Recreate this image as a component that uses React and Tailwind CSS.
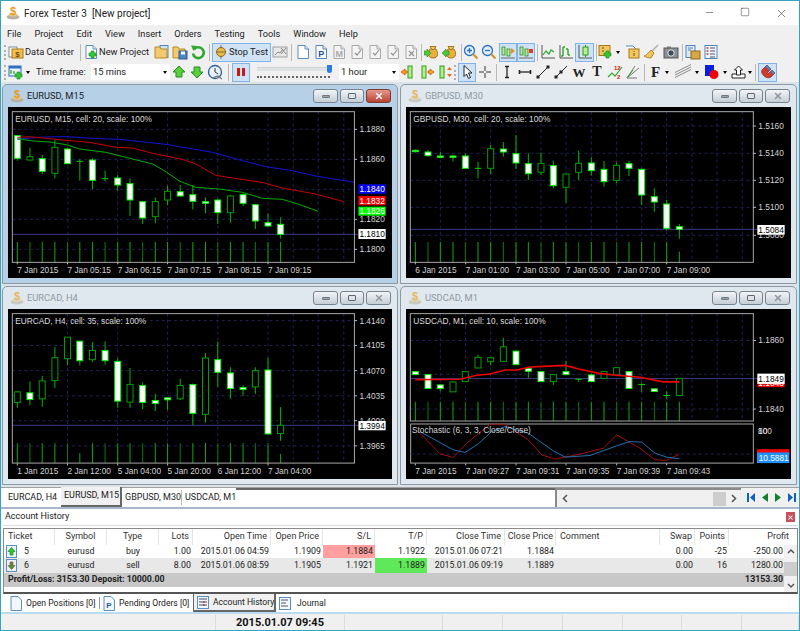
import { Minus, Square, X } from 'lucide-react'

const Svg = ({ w = 16, h = 16, children }) => (
  <svg width={w} height={h} viewBox={`0 0 ${w} ${h}`} className="shrink-0">{children}</svg>
)

const Grip = () => <div className="w-[2px] h-[15px] shrink-0 border-l-2 border-dotted border-[#b0b0b0]" />
const Sep = ({ className = '' }) => <div className={`w-px h-[17px] bg-[#b8b8b8] shrink-0 ${className}`} />
const Tb = ({ children }) => <div className="w-[18px] h-[19px] flex items-center justify-center shrink-0">{children}</div>
const Hl = ({ children, className = 'w-[18px]' }) => (
  <div className={`h-[19px] flex items-center justify-center shrink-0 bg-[#cfe3f5] border border-[#7eb4ea] ${className}`}>{children}</div>
)
const Caret = () => <div className="w-0 h-0 ml-[2px] border-x-[2.5px] border-x-transparent border-t-[3px] border-t-black shrink-0" />

const Logo = ({ dim }) => (
  <Svg w={14} h={14}>
    <ellipse cx="7" cy="11" rx="6.5" ry="2.6" fill={dim ? '#c9c9c0' : '#b8b0a0'} />
    <ellipse cx="7" cy="8.8" rx="4.5" ry="1.8" fill={dim ? '#e0d8c0' : '#e0c890'} />
    <text x="7" y="9" fontSize="11" fontWeight="700" textAnchor="middle" fill={dim ? '#e8b860' : '#e89a20'} fontFamily="Liberation Sans">$</text>
  </Svg>
)

const Doc = ({ children, stroke = '#5b8fc0', fill = '#fff' }) => (
  <Svg>
    <path d="M3 1.5h7l3.5 3.5v9.5H3z" fill={fill} stroke={stroke} />
    <path d="M10 1.5V5h3.5" fill="#dce8f4" stroke={stroke} />
    {children}
  </Svg>
)
const GreyDoc = ({ children }) => <Doc stroke="#a8a8a8" fill="#f4f4f4">{children}</Doc>
const Check = () => <path d="M6 9l2 2 4-5" fill="none" stroke="#909090" strokeWidth="1.2" />

const Plus = ({ x = 9, y = 9 }) => (
  <path d={`M${x + 2} ${y}h3v2h2v3h-2v2h-3v-2h-2v-3h2z`} fill="#35c435" stroke="#1c8a1c" strokeWidth=".6" />
)
const Folder = () => <path d="M1 3h5l1 2h6v9H1z" fill="#f2c870" stroke="#b98a1e" />
const Money = ({ arrow }) => (
  <Svg>
    <path d="M6 5c-2 3-3 9 3 9s5-6 3-9z" fill="#e9b040" stroke="#a87618" />
    <path d="M6 2.5h6l-2 3H8z" fill="#f0c860" stroke="#a87618" />
    <path d={arrow === 'l' ? 'M0 9l4-4v2h3v4H4v2z' : 'M7 9L3 5v2H0v4h3v2z'} fill="#4cc83a" stroke="#2b8a20" strokeWidth=".6" />
  </Svg>
)
const Lens = ({ plus }) => (
  <Svg>
    <circle cx="6.5" cy="6.5" r="5" fill="#dff0fb" stroke="#2f6fc0" strokeWidth="1.3" />
    <path d="M10 10l4.5 4.5" stroke="#c99a30" strokeWidth="2.2" />
    <path d={plus ? 'M4 6.5h5M6.5 4v5' : 'M4 6.5h5'} stroke="#2f6fc0" strokeWidth="1.3" />
  </Svg>
)
const CandleMini = ({ x, y, h, fill = '#b6f08a' }) => (
  <rect x={x} y={y} width="3" height={h} fill={fill} stroke="#1f7a1f" strokeWidth=".7" />
)
const ChartShift = ({ right }) => (
  <Svg>
    <path d="M1 14h14" stroke="#666" />
    <CandleMini x={2} y={3} h={8} />
    <CandleMini x={7} y={5} h={7} />
    <path d={right ? 'M11 4l4 3-4 3z' : 'M11 5h4v4h-4z'} fill={right ? '#ef8c1c' : '#e03c20'} />
  </Svg>
)
const Axis = ({ children }) => (
  <Svg>
    <path d="M2 1v13h13" fill="none" stroke="#555" />
    {children}
  </Svg>
)
const ArrowCandle = ({ kind }) => (
  <Svg>
    <rect x={kind === 'l' ? 7 : 3} y="2" width="4" height="12" fill="#b6f08a" stroke="#2f9a20" />
    {kind === 'l' && <path d="M0 8l4-3v2h2v2H4v2z" fill="#f2b400" stroke="#d02010" strokeWidth=".6" />}
    {kind === 'r' && <path d="M15 8l-4-3v2H9v2h2v2z" fill="#f2b400" stroke="#d02010" strokeWidth=".6" />}
    {kind === 'v' && <path d="M10 6l2.5-3L15 6zM10 10l2.5 3L15 10z" fill="#e86a1c" />}
  </Svg>
)

const Toolbar1 = () => (
  <div className="h-[20px] flex items-center pl-[3px] shrink-0 bg-[#f0f0f0] text-[9.3px] text-[#222]">
    <Grip />
    <div className="w-[70px] ml-[2px] flex items-center gap-[1px] shrink-0">
      <Svg>
        <rect x="1" y="3" width="8" height="10" fill="#fff" stroke="#7a8a99" />
        <rect x="4" y="5" width="11" height="9" fill="#f0c050" stroke="#a87618" />
        <text x="9.5" y="12.5" fontSize="8" fontWeight="700" textAnchor="middle" fill="#7a4a10" fontFamily="Liberation Sans">$</text>
      </Svg>
      <span className="whitespace-nowrap">Data Center</span>
    </div>
    <Sep className="ml-[2px]" />
    <div className="w-[70px] ml-[2px] flex items-center shrink-0">
      <Doc><Plus x={6} y={7} /></Doc>
      <span className="whitespace-nowrap">New Project</span>
    </div>
    <Tb><Svg><rect x="6" y="1.5" width="8" height="12" fill="#cfe3f5" stroke="#4c86c0" /><Folder /></Svg></Tb>
    <Tb><Svg><Folder /><rect x="7" y="7" width="8" height="8" fill="#4c86c0" stroke="#2c5a90" /><rect x="9" y="7.5" width="4" height="3" fill="#fff" /></Svg></Tb>
    <Tb>
      <Svg>
        <path d="M4.2 5.2A5.4 5.4 0 1 1 3 9.5" fill="none" stroke="#2ea82e" strokeWidth="2.6" />
        <path d="M1 1.5l6.5.5-4 5z" fill="#2ea82e" />
      </Svg>
    </Tb>
    <Sep className="ml-[2px]" />
    <Hl className="w-[59px] ml-[2px] gap-[2px] justify-start pl-[2px]">
      <Svg w={12} h={16}>
        <path d="M6 1v14" stroke="#777" />
        <ellipse cx="6" cy="8" rx="4.5" ry="4.5" fill="#e9b94a" stroke="#8a6a20" />
        <path d="M2 8h8" stroke="#8a6a20" />
      </Svg>
      <span className="whitespace-nowrap">Stop Test</span>
    </Hl>
    <Tb><Svg><rect x="1" y="3" width="14" height="10" fill="#e8e8e8" stroke="#a0a0a0" /><path d="M3 11l3-3 2 1 3-4M9 10l5-6M9 4l5 6" fill="none" stroke="#8a8a8a" /></Svg></Tb>
    <Sep className="ml-[2px]" />
    <div className="w-[2px]" />
    <Tb><Doc /></Tb>
    <Tb><Doc fill="#fff" stroke="#4c86c0"><text x="8.2" y="13" fontSize="9" fontWeight="700" textAnchor="middle" fill="#1c4f90" fontFamily="Liberation Sans">P</text></Doc></Tb>
    <Tb><GreyDoc><text x="8.2" y="13" fontSize="9" fontWeight="700" textAnchor="middle" fill="#a8a8a8" fontFamily="Liberation Sans">M</text></GreyDoc></Tb>
    <Tb><GreyDoc><Check /></GreyDoc></Tb>
    <Tb><GreyDoc><Check /></GreyDoc></Tb>
    <Tb><GreyDoc><Check /></GreyDoc></Tb>
    <Tb><GreyDoc><path d="M6 7l5 5M11 7l-5 5" stroke="#909090" strokeWidth="1.2" /></GreyDoc></Tb>
    <Sep className="ml-px" />
    <div className="w-px" />
    <Tb><Money /></Tb>
    <Tb><Money arrow="l" /></Tb>
    <Sep className="ml-[2px]" />
    <Tb><Lens plus /></Tb>
    <Tb><Lens /></Tb>
    <Hl className="w-[18px] ml-px"><ChartShift right /></Hl>
    <Hl className="w-[18px]"><ChartShift /></Hl>
    <Sep className="ml-[2px]" />
    <div className="w-px" />
    <Tb><Axis><path d="M3 11l3-4 3 3 2-4 3 2" fill="none" stroke="#2ea82e" strokeWidth="1.2" /></Axis></Tb>
    <Tb><Axis><path d="M5 3v9M5 3h2M5 12H3M10 5v6M10 11h2M10 5H8" fill="none" stroke="#2ea82e" strokeWidth="1.4" /></Axis></Tb>
    <Hl className="w-[19px]"><Axis><rect x="6" y="3" width="5" height="8" fill="#b6f08a" stroke="#2f9a20" /><path d="M8.5 1v2M8.5 11v2" stroke="#2f9a20" /></Axis></Hl>
    <Sep className="ml-[2px]" />
    <div className="w-px flex-none" />
    <div className="w-[22px] flex items-center shrink-0">
      <Svg><rect x="1" y="1.5" width="11" height="10" fill="#f0c860" stroke="#a87618" /><path d="M4 4h2M4 7h2" stroke="#7a4a10" /><Plus x={6} y={7} /></Svg>
      <Caret />
    </div>
    <div className="w-[4px]" />
    <Tb><Svg><path d="M1 2h7l3 3v3" fill="#fff" stroke="#4c86c0" /><rect x="4" y="5" width="10" height="9" fill="#f0c860" stroke="#a87618" /><path d="M9 7v1M9 9v3" stroke="#7a4a10" /></Svg></Tb>
    <Tb>
      <Svg>
        <path d="M15 1L8 8" stroke="#b0b0b0" strokeWidth="1.6" />
        <path d="M8 6l3 3-3 5c-2 0-6-1-7-2 2 0 4-3 7-6z" fill="#f0c860" stroke="#b08a30" />
      </Svg>
    </Tb>
    <div className="w-[2px]" />
    <Tb><Svg><rect x="1" y="4" width="14" height="10" fill="#8a8f96" stroke="#555" /><circle cx="8" cy="9" r="3.2" fill="#3a4a5a" stroke="#dfe6ec" /><rect x="4" y="2.5" width="4" height="2" fill="#777" /></Svg></Tb>
    <Sep className="ml-[2px]" />
    <div className="w-px" />
    <Tb><Svg><rect x="1" y="1.5" width="9" height="12" fill="#dce8f4" stroke="#4c86c0" /><rect x="6" y="7" width="9" height="8" fill="#d8a848" stroke="#8a6a20" /><path d="M3 4h5M3 6h3" stroke="#4c86c0" /></Svg></Tb>
    <Tb><Svg><rect x="2" y="1.5" width="12" height="13" fill="#eef4fa" stroke="#4c86c0" /><path d="M7 4h5M7 7h5M7 10h5M7 13h5" stroke="#556" /><path d="M3.5 4h2M3.5 7h2M3.5 10h2" stroke="#d04030" strokeWidth="1.4" /></Svg></Tb>
  </div>
)

const Combo = ({ label, className }) => (
  <div className={`h-[16px] flex items-center justify-between bg-white shrink-0 pl-[2px] pr-[3px] ${className}`}>
    <span>{label}</span>
    <Caret />
  </div>
)

const Toolbar2 = () => (
  <div className="h-[20px] flex items-center pl-[3px] shrink-0 bg-[#f0f0f0] text-[9.3px] text-[#222]">
    <Grip />
    <div className="w-[23px] ml-[2px] flex items-center shrink-0">
      <Svg><rect x="1" y="2" width="12" height="10" fill="#e8f0f8" stroke="#2f6fc0" /><rect x="1" y="2" width="12" height="2.5" fill="#2f6fc0" /><path d="M3 10V6M6 10V7" stroke="#2ea82e" strokeWidth="1.3" /><Plus x={7} y={8} /></Svg>
      <Caret />
    </div>
    <span className="ml-[5px] w-[50px] whitespace-nowrap shrink-0">Time frame:</span>
    <Combo label="15 mins" className="w-[79px] ml-[5px]" />
    <Tb><Svg><path d="M8 2l6 6h-3v5H5V8H2z" fill="#58d040" stroke="#2b8a20" /></Svg></Tb>
    <Tb><Svg><path d="M8 14L2 8h3V3h6v5h3z" fill="#58d040" stroke="#2b8a20" /></Svg></Tb>
    <Tb><Svg><circle cx="8" cy="8" r="6.5" fill="#e8f0f8" stroke="#2f5f9a" strokeWidth="1.3" /><path d="M8 4v4l3 2" fill="none" stroke="#333" /><path d="M5 14l6-2 4 3" fill="none" stroke="#777" strokeWidth="1.2" /></Svg></Tb>
    <Sep className="ml-[4px]" />
    <Hl className="w-[18px] ml-[3px]">
      <div className="flex gap-[2px]">
        <div className="w-[3px] h-[8px] bg-[#d01818]" />
        <div className="w-[3px] h-[8px] bg-[#d01818]" />
      </div>
    </Hl>
    <div className="relative w-[80px] h-[17px] ml-[5px] shrink-0">
      <div className="mt-[3px] ml-[2px] w-[75px] h-[4px] bg-[#dfe3e3] border-t border-[#cfd3d3]" />
      <div className="mt-[4px] ml-[2px] w-[73px] h-[3px] border-b-2 border-dotted border-[#666]" />
      <div className="absolute left-[72px] top-[1px] w-[5px] h-[8px] bg-[#2a7de0] rounded-b-[3px]" />
    </div>
    <Combo label="1 hour" className="w-[60px] ml-[4px]" />
    <div className="w-px" />
    <Tb><ArrowCandle kind="l" /></Tb>
    <Tb><ArrowCandle kind="r" /></Tb>
    <Tb><ArrowCandle kind="v" /></Tb>
    <Grip />
    <Hl className="w-[18px] ml-[2px]"><Svg><path d="M5 1.5v11l2.5-2.5 2 4.5 2-1-2-4.5h3.5z" fill="#fff" stroke="#222" /></Svg></Hl>
    <Tb><Svg><path d="M8 2v5M8 9v5M2 8h5M9 8h5" stroke="#333" /></Svg></Tb>
    <Sep className="ml-[2px]" />
    <div className="w-px" />
    <Tb><Svg><path d="M8 3v10" stroke="#222" strokeWidth="1.3" /><path d="M6 2.5h4M6 13.5h4" stroke="#222" strokeWidth="1.6" /></Svg></Tb>
    <Tb><Svg><path d="M2 8h12" stroke="#222" strokeWidth="1.3" /><path d="M2.5 6v4M13.5 6v4" stroke="#222" strokeWidth="1.6" /></Svg></Tb>
    <Tb><Svg><path d="M3 13L13 3" stroke="#222" /><rect x="1.5" y="11.5" width="3" height="3" fill="#222" /><rect x="11.5" y="1.5" width="3" height="3" fill="#222" /></Svg></Tb>
    <Tb><Svg><path d="M3 13L14 2" stroke="#222" /><rect x="1.5" y="11.5" width="3" height="3" fill="#222" /><rect x="6.5" y="6.5" width="3" height="3" fill="#222" /></Svg></Tb>
    <Tb><span className="font-['Liberation_Serif',serif] font-bold text-[13px] leading-none text-[#222]">W</span></Tb>
    <Tb><span className="font-['Liberation_Serif',serif] font-bold text-[14px] leading-none text-[#222]">T</span></Tb>
    <Tb>
      <Svg>
        <path d="M1 13l4-4 3 3 4-5 3-4" fill="none" stroke="#2ea82e" strokeWidth="1.2" />
        <text x="7" y="6" fontSize="6" fontWeight="700" fill="#d02010" fontFamily="Liberation Sans">12</text>
        <text x="10" y="15" fontSize="6" fontWeight="700" fill="#d02010" fontFamily="Liberation Sans">2</text>
      </Svg>
    </Tb>
    <Tb><Svg><path d="M2 14L14 4M2 14l8-12M2 14h10" fill="none" stroke="#777" /><path d="M2 14l6-8" stroke="#2ea82e" /></Svg></Tb>
    <Sep className="ml-[2px]" />
    <div className="w-[6px]" />
    <div className="w-[20px] flex items-center shrink-0">
      <span className="font-['Liberation_Serif',serif] font-bold text-[15px] leading-none text-[#222] w-[12px]">F</span>
      <Caret />
    </div>
    <div className="w-[26px] ml-[3px] flex items-center shrink-0">
      <Svg w={19} h={16}>
        <path d="M1 11L17 3M1 13.500L17 5.500M1 8.500L17 .5" stroke="#8a8a8a" strokeWidth="1" fill="none" />
      </Svg>
      <Caret />
    </div>
    <div className="w-[23px] ml-[4px] flex items-center shrink-0">
      <Svg w={17} h={16}>
        <rect x="1" y="1" width="9" height="11" fill="#0a1ee0" />
        <circle cx="10" cy="10.500" r="4.500" fill="#f00000" />
      </Svg>
      <Caret />
    </div>
    <div className="w-[22px] ml-[3px] flex items-center shrink-0">
      <Svg>
        <path d="M2 14h13v-4H2z" fill="#fff" stroke="#222" />
        <path d="M8.500 2l4 4h-2v5h-4V6h-2z" fill="#fff" stroke="#222" />
      </Svg>
      <Caret />
    </div>
    <Sep className="ml-[3px]" />
    <Hl className="w-[19px] ml-[2px]">
      <Svg>
        <path d="M2 6l5-5 4 4-3 3c-1 1 0 2 1 1l3-3 3 3-4 4c-4 3-11-3-9-7z" fill="#d03a2a" stroke="#7a1f1f" strokeWidth=".7" />
        <path d="M7 1l4 4-1.500 1.500-4-4zM12 6l3 3-1.500 1.500-3-3z" fill="#4c86c0" />
      </Svg>
    </Hl>
  </div>
)

const V = (l, step, n) => Array.from({ length: n }, (_, i) => l + step * i)

function Chart({ x0, title, candles, frameBottom = 487, top = 21, gridH, gridV, prices, xlabels, hline, tags, lines = [], volTop, volBottom = 487, volShort = {}, children }) {
  const left = x0 + 13
  const right = x0 + 1042
  const ft = top + 14
  return (
    <svg viewBox={`${x0} ${top} 1155 513`} className="block w-full h-[171px] bg-black" fontFamily="Liberation Sans" preserveAspectRatio="none">
      {gridH.map((y) => <path key={y} d={`M${left} ${y}H${right}`} stroke="#20205a" strokeWidth="3" strokeDasharray="9 9" />)}
      {gridV.map((x) => <path key={x} d={`M${x} ${ft}V${top + 466}`} stroke="#20205a" strokeWidth="3" strokeDasharray="9 9" />)}
      {candles.map(([x], i) => (
        <path key={x} d={`M${x} ${volShort[x] ?? volTop}V${volBottom}`} stroke={i % 3 === 1 ? '#0a7a0a' : '#0fa80f'} strokeWidth="3" />
      ))}
      <path d={`M${left} ${hline}H${right + 14}`} stroke="#3a3a8c" strokeWidth="3" />
      {candles.map(([x, hi, lo, t, b, w]) => (
        <g key={x}>
          <path d={`M${x} ${hi}V${lo}`} stroke="#00b800" strokeWidth="3" />
          {b - t < 4
            ? <path d={`M${x - 10} ${t + 1}h20`} stroke="#00d000" strokeWidth="3" />
            : <rect x={x - 9} y={t} width="18" height={b - t} fill={w ? '#fff' : '#000'} stroke={w ? '#00f000' : '#00a000'} strokeWidth="3" />}
        </g>
      ))}
      {lines.map((l, i) => <polyline key={i} points={l.pts} fill="none" stroke={l.c} strokeWidth={l.w ?? 3} />)}
      {children}
      <rect x={left} y={ft} width={right - left} height={frameBottom - ft} fill="none" stroke="#a8a8a8" strokeWidth="3" />
      <text x={left + 9} y={ft + 32} fontSize="25" fill="#dcdcdc">{title}</text>
      {prices.map(([y, t]) => (
        <g key={t}>
          <path d={`M${right} ${y}h8`} stroke="#bbb" strokeWidth="3" />
          <text x={right + 15} y={y + 9} fontSize="25" fill="#d4d4d4">{t}</text>
        </g>
      ))}
      {tags.map(([y0, y1, bg, fg, t]) => (
        <g key={t}>
          <rect x={right + 12} y={y0} width={82} height={y1 - y0} fill={bg} />
          <text x={right + 15} y={(y0 + y1) / 2 + 9} fontSize="25" fill={fg}>{t}</text>
        </g>
      ))}
      {xlabels.map(([x, t]) => (
        <g key={t}>
          <path d={`M${x} ${top + 466}v6`} stroke="#bbb" strokeWidth="3" />
          <text x={x} y={top + 497} fontSize="25" fill="#d4d4d4">{t}</text>
        </g>
      ))}
    </svg>
  )
}

function MdiWindow({ active, name, chart }) {
  return (
    <div className={`rounded-t-[5px] border border-[#8d9aa6] px-[5px] pb-[5px] flex flex-col ${active ? 'bg-[#b6d0e8]' : 'bg-[#dfe8ef]'}`}>
      <div className="h-[22px] flex items-center shrink-0">
        <div className="ml-[2px] mr-[3px]"><Logo dim={!active} /></div>
        <span className={`text-[9.3px] ${active ? 'text-[#1c1c1c]' : 'text-[#8e99a3]'}`}>{name}</span>
        <div className="ml-auto flex gap-[2px] mr-px">
          <div className="w-[25px] h-[14px] flex items-center justify-center rounded-[3px] border border-[#77848f] bg-gradient-to-b from-[#f2f5f8] to-[#c5ced6]">
            <div className="w-[8px] h-[3px] bg-[#9aa6b0] border border-[#6c7884] rounded-[1px]" />
          </div>
          <div className="w-[24px] h-[14px] flex items-center justify-center rounded-[3px] border border-[#77848f] bg-gradient-to-b from-[#f2f5f8] to-[#c5ced6]">
            <div className="w-[8px] h-[6px] bg-[#dfe4e8] border border-[#5c6874] rounded-[1px]" />
          </div>
          <div className={`w-[25px] h-[14px] flex items-center justify-center rounded-[3px] border ${active ? 'border-[#7a3a34] bg-gradient-to-b from-[#e8978c] to-[#b8402f]' : 'border-[#77848f] bg-gradient-to-b from-[#f2f5f8] to-[#c5ced6]'}`}>
            <X size={10} strokeWidth={3.5} className={active ? 'text-white' : 'text-[#8c97a2]'} />
          </div>
        </div>
      </div>
      {chart}
    </div>
  )
}

const eurusd = [
  [53,105,182,107,175,1],[91,143,182,170,180,0],[128,165,222,176,214,1],[166,120,235,142,220,0],[204,143,192,147,191,1],
  [241,178,242,183,186,1],[279,175,267,180,241,1],[317,212,245,235,237,1],[355,225,272,234,255,1],[392,235,348,251,300,1],
  [430,304,372,305,354,1],[468,292,370,305,350,0],[505,257,316,274,300,0],[543,255,290,275,288,1],[581,255,328,284,304,1],
  [619,292,340,305,310,1],[656,296,372,300,338,1],[694,285,368,288,338,0],[732,280,318,284,310,1],[769,312,387,314,363,1],
  [807,340,380,368,378,1],[845,352,416,373,403,1],
]
const gbpusd = [
  [46,148,158,151,155,1],[84,150,170,156,167,1],[121,155,175,168,172,1],[159,165,185,168,172,1],[196,160,207,168,205,1],
  [234,185,235,204,206,1],[272,135,223,146,205,0],[310,126,170,147,156,1],[348,105,207,161,189,1],[385,160,240,191,221,1],
  [423,158,225,190,217,0],[460,182,265,197,257,1],[498,220,308,222,262,0],[536,152,240,190,217,0],[574,172,227,189,212,1],
  [612,183,260,208,245,1],[650,187,250,196,241,0],[687,183,228,191,205,1],[725,205,315,208,285,1],[763,265,335,290,306,1],
  [800,300,392,312,385,1],[838,372,416,380,388,1],
]
const eurcad = [
  [53,318,368,320,352,0],[91,288,360,323,343,1],[128,272,365,287,341,0],[166,185,308,217,286,0],[204,155,240,155,220,0],
  [241,167,240,167,226,1],[279,170,230,195,223,0],[317,168,238,195,226,1],[355,218,368,228,348,1],[392,248,368,298,351,0],
  [430,292,372,301,352,1],[468,326,378,346,355,1],[505,338,375,338,344,1],[543,280,345,301,341,0],[581,295,420,298,385,1],
  [619,203,413,218,388,0],[656,168,305,223,261,1],[694,246,340,263,310,1],[732,300,332,307,313,1],[769,246,326,256,305,0],
  [807,217,447,254,447,1],[845,366,468,421,446,0],
]
const usdcad = [
  [46,258,268,259,268,1],[84,268,310,268,310,1],[121,298,318,299,310,1],[159,290,320,290,320,0],[196,258,290,259,289,0],
  [234,208,248,216,248,0],[272,215,240,217,229,0],[310,157,228,184,228,0],[348,197,238,197,238,1],[385,245,278,249,258,1],
  [423,259,289,259,289,1],[460,268,299,268,289,0],[498,226,268,259,268,1],[536,280,290,281,283,1],[574,265,290,269,289,1],
  [612,259,280,259,280,0],[650,247,269,247,269,0],[687,259,310,259,310,1],[725,292,320,297,299,1],[763,311,319,311,319,1],
  [800,318,342,330,332,1],[838,280,331,280,331,0],
]

const chart1 = (
  <Chart x0={25} title="EURUSD, M15, cell: 20, scale: 100%" candles={eurusd} gridH={[88, 178, 268, 358, 448]} gridV={[205, 355, 505, 656, 807, 883, 958, 1035]}
    prices={[[88, '1.1880'], [178, '1.1860'], [358, '1.1820'], [448, '1.1800']]} hline={403} volTop={426}
    xlabels={[[53, '7 Jan 2015'], [204, '7 Jan 05:15'], [355, '7 Jan 06:15'], [505, '7 Jan 07:15'], [656, '7 Jan 08:15'], [807, '7 Jan 09:15']]}
    tags={[[253, 281, '#0000ff', '#fff', '1.1840'], [288, 316, '#f00000', '#fff', '1.1832'], [320, 347, '#00ff00', '#fff', '1.1826'], [387, 417, '#fff', '#000', '1.1810']]}
    lines={[
      { c: '#1414d8', pts: '53,118 130,111 200,110 280,115 360,118 500,133 640,157 730,182 800,200 880,212 950,228 1067,247' },
      { c: '#c80000', pts: '53,112 90,110 130,114 200,121 270,127 350,142 400,144 460,160 550,178 590,192 650,226 740,240 790,247 850,264 950,282 1035,305' },
      { c: '#00b000', pts: '53,116 100,123 150,126 200,134 240,147 320,157 400,177 460,192 500,215 540,243 590,262 660,267 730,277 790,295 850,298 900,313 958,334' },
    ]} />
)
const chart2 = (
  <Chart x0={18} title="GBPUSD, M30, cell: 20, scale: 100%" candles={gbpusd} gridH={[78, 160, 241, 322, 406]} gridV={[121, 197, 272, 348, 423, 498, 574, 650, 725, 800, 876, 951, 1027]}
    prices={[[78, '1.5160'], [160, '1.5140'], [241, '1.5120'], [322, '1.5100'], [406, '1.5080']]} hline={388} volTop={426} volShort={{ 838: 455 }}
    xlabels={[[46, '6 Jan 2015'], [197, '7 Jan 01:00'], [348, '7 Jan 03:00'], [498, '7 Jan 05:00'], [650, '7 Jan 07:00'], [800, '7 Jan 09:00']]}
    tags={[[375, 404, '#fff', '#000', '1.5084']]} />
)
const chart3 = (
  <Chart x0={25} top={70} frameBottom={535} title="EURCAD, H4, cell: 35, scale: 100%" candles={eurcad} gridH={[105, 180, 256, 332, 407, 483]} gridV={[204, 355, 505, 656, 807, 883, 958, 1035]}
    prices={[[105, '1.4140'], [180, '1.4105'], [256, '1.4070'], [332, '1.4035'], [407, '1.4000'], [483, '1.3965']]} hline={421} volTop={475} volBottom={535} volShort={{ 241: 505, 845: 507 }}
    xlabels={[[53, '1 Jan 2015'], [204, '2 Jan 12:00'], [355, '5 Jan 04:00'], [505, '5 Jan 20:00'], [656, '6 Jan 12:00'], [807, '7 Jan 04:00']]}
    tags={[[408, 436, '#fff', '#000', '1.3994']]} />
)
const chart4 = (
  <Chart x0={18} top={70} frameBottom={408} title="USDCAD, M1, cell: 10, scale: 100%" candles={usdcad} gridH={[165, 267, 372]} gridV={V(121, 75.5, 13)}
    prices={[[165, '1.1860'], [372, '1.1840']]} hline={280} volTop={350} volBottom={408}
    xlabels={[[46, '7 Jan 2015'], [197, '7 Jan 09:27'], [348, '7 Jan 09:31'], [498, '7 Jan 09:35'], [650, '7 Jan 09:39'], [800, '7 Jan 09:43']]}
    tags={[[280, 306, '#f00000', '#fff', '1.1848'], [265, 296, '#fff', '#000', '1.1849']]}
    lines={[{ c: '#f00000', w: 5, pts: '46,283 180,282 230,270 270,266 315,254 350,254 390,245 430,243 495,240 540,252 600,265 650,270 720,276 790,290 838,290' }]}>
    <rect x="18" y="409" width="1041" height="126" fill="#000" />
    <rect x="32" y="417" width="1028" height="118" fill="none" stroke="#a8a8a8" strokeWidth="3" />
    <path d="M32 508H1060" stroke="#20205a" strokeWidth="3" strokeDasharray="9 9" />
    <polyline points="60,445 120,507 160,518 200,475 270,418 315,418 385,465 425,510 465,523 540,508 610,490 650,450 720,490 765,525 800,527 838,508" fill="none" stroke="#a01010" strokeWidth="3" />
    <polyline points="60,440 160,495 195,503 235,477 275,440 315,425 385,445 460,498 495,517 570,512 650,483 690,470 725,472 765,505 800,517 838,522" fill="none" stroke="#2070b0" strokeWidth="3" />
    <text x="36" y="444" fontSize="25" fill="#d4d4d4">Stochastic (6, 3, 3, Close/Close)</text>
    <text x="1074" y="446" fontSize="25" fill="#d4d4d4">100</text>
    <text x="1074" y="446" fontSize="25" fill="#d4d4d4">80</text>
    <rect x="1071" y="493" width="97" height="16" fill="#f00000" />
    <rect x="1071" y="503" width="97" height="32" fill="#1e90ff" />
    <text x="1076" y="528" fontSize="25" fill="#fff">10.5881</text>
  </Chart>
)

const cols = 'grid grid-cols-[51px_52px_52px_34px_78px_52px_52px_52px_78px_51px_104px_35px_34px_56px]'

const Head = ({ children, className = '' }) => (
  <div className={`border-r border-[#e4e4e4] whitespace-nowrap h-full flex items-center ${className}`}>{children}</div>
)
const Cell = ({ children, className = '' }) => (
  <div className={`flex items-center justify-end pr-[2px] ${className}`}>{children}</div>
)

const TradeIcon = ({ up }) => (
  <Svg w={11} h={13}>
    <rect x=".5" y=".5" width="10" height="12" fill="#eaf2fa" stroke="#5b8fc0" />
    <path d={up ? 'M5.500 2.500l3.500 4H7v3.500H4V6.500H2z' : 'M5.500 10.500l3.500-4H7V3H4v3.500H2z'} fill={up ? '#35c435' : '#35a035'} stroke={up ? '#1c8a1c' : '#c04030'} strokeWidth=".7" />
  </Svg>
)

const HistoryRow = ({ up, ticket, type, lots, open, oPrice, sl, tp, close, cPrice, points, profit, even }) => (
  <div className={`${cols} ${even ? 'h-[15px] bg-[#e8e8e8]' : 'h-[13px] bg-white'}`}>
    <div className="flex items-center pl-[2px] gap-[7px]"><TradeIcon up={up} /><span>{ticket}</span></div>
    <div className="flex items-center justify-center">eurusd</div>
    <div className="flex items-center justify-center">{type}</div>
    <Cell>{lots}</Cell>
    <Cell>{open}</Cell>
    <Cell>{oPrice}</Cell>
    <Cell className={even ? '' : 'bg-[#ff9f9f]'}>{sl}</Cell>
    <Cell className={even ? 'bg-[#5fe85a]' : ''}>{tp}</Cell>
    <Cell>{close}</Cell>
    <Cell>{cPrice}</Cell>
    <div />
    <Cell>0.00</Cell>
    <Cell>{points}</Cell>
    <Cell>{profit}</Cell>
  </div>
)

const SmallDoc = ({ letter }) => (
  <Svg w={12} h={15}>
    <path d="M1 .5h7l3.500 3.500v10.500H1z" fill="#f2f7fc" stroke="#5b8fc0" />
    {letter && <text x="6" y="12" fontSize="8" fontWeight="700" textAnchor="middle" fill="#2c5a90" fontFamily="Liberation Sans">{letter}</text>}
  </Svg>
)

export default function App() {
  return (
    <div className="w-[800px] h-[631px] flex flex-col overflow-hidden border border-[#38a3bf] bg-[#f0f0f0] font-['Roboto',sans-serif] text-[#222]">
      <div className="h-[24px] shrink-0 bg-white flex items-center pl-[5px]">
        <Logo />
        <span className="ml-[4px] text-[10px] text-[#222] whitespace-pre">Forex Tester 3  [New project]</span>
        <div className="ml-auto flex text-[#333]">
          <div className="w-[36px] flex justify-center"><Minus size={11} strokeWidth={1.2} /></div>
          <div className="w-[36px] flex justify-center"><Square size={10} strokeWidth={1.2} /></div>
          <div className="w-[36px] flex justify-center"><X size={13} strokeWidth={1.1} /></div>
        </div>
      </div>
      <div className="h-[17px] shrink-0 flex items-center pl-[6px] gap-[13px] text-[9.2px] text-[#222]">
        {['File', 'Project', 'Edit', 'View', 'Insert', 'Orders', 'Testing', 'Tools', 'Window', 'Help'].map((m) => (
          <span key={m}>{m}</span>
        ))}
      </div>
      <Toolbar1 />
      <Toolbar2 />
      <div className="h-[405px] shrink-0 grid grid-cols-[396px_397px] grid-rows-[200px_199px] gap-x-[2px] gap-y-[2px] pl-px pt-[2px] bg-[#dbe3ea]">
        <MdiWindow active name="EURUSD, M15" chart={chart1} />
        <MdiWindow name="GBPUSD, M30" chart={chart2} />
        <MdiWindow name="EURCAD, H4" chart={chart3} />
        <MdiWindow name="USDCAD, M1" chart={chart4} />
      </div>
      <div className="h-[20px] shrink-0 flex bg-white border-t border-[#a0a0a0] text-[9px] whitespace-nowrap">
        <div className="w-[60px] pl-[7px] flex items-center shrink-0">EURCAD, H4</div>
        <div className="w-[61px] -mt-px pl-[2px] flex items-center justify-center shrink-0 bg-[#f0f0f0] border-b-2 border-r-2 border-[#666]">EURUSD, M15</div>
        <div className="w-[60px] pl-[3px] flex items-center shrink-0 border-r border-[#bbb] my-[2px]">GBPUSD, M30</div>
        <div className="pl-[3px] flex items-center shrink-0">USDCAD, M1</div>
        <div className="flex-1 border-t-2 border-[#666]" />
        <div className="w-[186px] flex items-center justify-between pl-[5px] pr-[4px] shrink-0 bg-[#f0f0f0] border-l-2 border-t-2 border-[#8a8a8a] text-[#666]">
          <svg width="6" height="9" viewBox="0 0 6 9"><path d="M5 1L1.500 4.500 5 8" fill="none" stroke="#555" strokeWidth="1.500" /></svg>
          <div className="flex items-center gap-[5px]">
            <div className="w-[13px] h-[14px] bg-[#cdcdcd]" />
            <svg width="6" height="9" viewBox="0 0 6 9"><path d="M1 1l3.500 3.500L1 8" fill="none" stroke="#555" strokeWidth="1.500" /></svg>
          </div>
        </div>
        <div className="w-[58px] shrink-0 flex items-center gap-[7px] bg-[#f0f0f0] pl-[6px]">
          <svg width="8" height="9" viewBox="0 0 8 9"><path d="M0 0h2v9H0zM8 0v9L3 4.500z" fill="#1060c0" /></svg>
          <svg width="6" height="9" viewBox="0 0 6 9"><path d="M6 0v9L0 4.500z" fill="#108030" /></svg>
          <svg width="6" height="9" viewBox="0 0 6 9"><path d="M0 0v9l6-4.500z" fill="#108030" /></svg>
          <svg width="8" height="9" viewBox="0 0 8 9"><path d="M6 0h2v9H6zM0 0v9l5-4.500z" fill="#1060c0" /></svg>
        </div>
      </div>
      <div className="h-[87px] shrink-0 bg-white border-t-2 border-[#a8b8c8] pl-[2px] pr-px flex flex-col text-[8.8px]">
        <div className="h-[17px] shrink-0 flex items-center justify-between pl-[2px] pr-[3px] border-b border-[#dcdcdc] text-[9px]">
          <span>Account History</span>
          <div className="w-[9px] h-[10px] bg-[#c8505a] flex items-center justify-center">
            <X size={7} strokeWidth={3.5} className="text-white" />
          </div>
        </div>
        <div className="mt-[2px] flex-1 border-t border-x border-[#8a8a8a] border-b-2 border-b-[#555] relative">
          <div className={`${cols} h-[16px] text-[9px] text-[#333] bg-white`}>
            <Head className="pl-[4px]">Ticket</Head>
            <Head className="justify-center">Symbol</Head>
            <Head className="justify-center">Type</Head>
            <Head className="justify-end pr-[3px]">Lots</Head>
            <Head className="justify-end pr-[3px]">Open Time</Head>
            <Head className="justify-end pr-[3px]">Open Price</Head>
            <Head className="justify-end pr-[3px]">S/L</Head>
            <Head className="justify-end pr-[3px]">T/P</Head>
            <Head className="justify-end pr-[3px]">Close Time</Head>
            <Head className="justify-end pr-[2px]">Close Price</Head>
            <Head className="pl-[4px]">Comment</Head>
            <Head className="justify-end pr-[2px]">Swap</Head>
            <Head className="justify-end pr-[3px]">Points</Head>
            <div className="flex items-center justify-end w-[60px]">Profit</div>
          </div>
          <HistoryRow up ticket="5" type="buy" lots="1.00" open="2015.01.06 04:59" oPrice="1.1909" sl="1.1884" tp="1.1922" close="2015.01.06 07:21" cPrice="1.1884" points="-25" profit="-250.00" />
          <HistoryRow even ticket="6" type="sell" lots="8.00" open="2015.01.06 08:59" oPrice="1.1905" sl="1.1921" tp="1.1889" close="2015.01.06 09:19" cPrice="1.1889" points="16" profit="1280.00" />
          <div className="w-[781px] h-[14px] bg-[#c8c8c8] font-bold flex items-center justify-between pl-[4px] pr-[2px]">
            <span>Profit/Loss: 3153.30 Deposit: 10000.00</span>
            <span>13153.30</span>
          </div>
          <div className="absolute right-0 top-[16px] bottom-0 w-[13px] bg-[#f0f0f0] flex flex-col items-center justify-between py-[3px]">
            <svg width="8" height="6" viewBox="0 0 8 6"><path d="M1 5l3-3 3 3" fill="none" stroke="#555" strokeWidth="1.500" /></svg>
            <div className="w-full h-[14px] bg-[#cdcdcd]" />
            <svg width="8" height="6" viewBox="0 0 8 6"><path d="M1 1l3 3 3-3" fill="none" stroke="#555" strokeWidth="1.500" /></svg>
          </div>
        </div>
      </div>
      <div className="h-[20px] shrink-0 bg-white flex items-center pl-[9px] border-b-2 border-[#b9dcee] text-[8.6px] whitespace-nowrap">
        <SmallDoc />
        <span className="ml-[4px] w-[73px]">Open Positions [0]</span>
        <div className="w-px h-[12px] bg-[#999]" />
        <div className="ml-[3px]"><SmallDoc letter="P" /></div>
        <span className="ml-[4px] w-[74px]">Pending Orders [0]</span>
        <div className="w-[83px] h-[18px] flex items-center gap-[4px] pl-[3px] bg-[#f0f0f0] border-r-2 border-b-2 border-l border-[#666]">
          <Svg w={12} h={13}>
            <rect x=".5" y=".5" width="11" height="12" fill="#f2f7fc" stroke="#5b8fc0" />
            <path d="M2 3h8M2 6h8M2 9h8" stroke="#7a8a99" strokeWidth="1.500" />
            <path d="M6 6h2M6 9h2" stroke="#d04030" strokeWidth="1.500" />
          </Svg>
          <span>Account History</span>
        </div>
        <div className="ml-[3px]">
          <Svg w={12} h={13}>
            <rect x=".5" y=".5" width="11" height="12" fill="#f2f7fc" stroke="#5b8fc0" />
            <path d="M2 3h7M2 6h5M2 9h7" stroke="#556" />
          </Svg>
        </div>
        <span className="ml-[6px]">Journal</span>
      </div>
      <div className="flex-1 grid grid-cols-[215px_129px_98px_60px_60px_60px_59px_60px_1fr] bg-[#f0f0f0] mt-px">
        {[0, 1, 2, 3, 4, 5, 6, 7, 8].map((i) => (
          <div key={i} className={`border-r border-[#dcdcdc] flex items-center ${i === 1 ? 'pl-[20px] font-bold text-[11px] text-[#111] whitespace-nowrap' : ''}`}>
            {i === 1 ? '2015.01.07 09:45' : ''}
          </div>
        ))}
      </div>
    </div>
  )
}
